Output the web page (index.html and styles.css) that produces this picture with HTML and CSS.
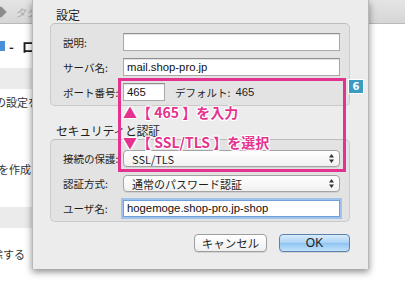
FILE: index.html
```html
<!DOCTYPE html>
<html lang="ja">
  <head>
    <meta charset="utf-8">
    <title>設定</title>
    <link rel="stylesheet" href="styles.css">
  </head>
  <body>
    <div class="page">
      <div class="topbar">
        <span class="tab-icon"></span>
        <span class="tab-label">タク</span>
      </div>
      <div class="side">
        <div class="side-title"><span class="sq"></span><span class="dash">-</span><span class="big">ロ</span></div>
        <div class="band"></div>
        <div class="side-line l1">の設定を</div>
        <div class="side-line l2">を作成す</div>
        <div class="band"></div>
        <div class="side-line l3">除する</div>
      </div>
    </div>

    <div class="sheet">
      <div class="heading">設定</div>
      <div class="group">
        <div class="row">
          <label>説明:</label>
          <div class="field"></div>
        </div>
        <div class="row">
          <label>サーバ名:</label>
          <div class="field">mail.shop-pro.jp</div>
        </div>
        <div class="row">
          <label>ポート番号:</label>
          <div class="field port">465</div>
          <span class="default">デフォルト:</span>
          <span class="default-val">465</span>
        </div>
      </div>

      <div class="heading second">セキュリティと認証</div>
      <div class="group group2">
        <div class="row">
          <label>接続の保護:</label>
          <div class="popup">
            <span>SSL/TLS</span>
            <svg class="arrows" width="5" height="9" viewBox="0 0 5 9"><path d="M2.5 0 L5 3.5 H0 Z M2.5 9 L5 5.5 H0 Z" fill="#333"/></svg>
          </div>
        </div>
        <div class="row">
          <label>認証方式:</label>
          <div class="popup">
            <span>通常のパスワード認証</span>
            <svg class="arrows" width="5" height="9" viewBox="0 0 5 9"><path d="M2.5 0 L5 3.5 H0 Z M2.5 9 L5 5.5 H0 Z" fill="#333"/></svg>
          </div>
        </div>
        <div class="row">
          <label>ユーザ名:</label>
          <div class="field focus">hogemoge.shop-pro.jp-shop</div>
        </div>
      </div>

      <div class="buttons">
        <div class="btn">キャンセル</div>
        <div class="btn ok">OK</div>
      </div>

      <!-- annotation overlay -->
      <div class="note">
        <div class="note-line">▲【 465 】を入力</div>
        <div class="note-line">▼【 SSL/TLS 】を選択</div>
      </div>
      <div class="badge">6</div>
    </div>
  </body>
</html>
```

FILE: styles.css
```css
html, body {
  margin: 0;
  padding: 0;
}

body {
  width: 405px;
  height: 283px;
  overflow: hidden;
  position: relative;
  background: #FFFFFF;
  color: #1E1E1E;
  font-family: "Noto Sans CJK JP", sans-serif;
  font-size: 11px;
}

/* background page */

.topbar {
  height: 23px;
  background: linear-gradient(#E4E4E4, #D6D6D6);
  border-bottom: 1px solid #B9B9B9;
  display: flex;
  align-items: center;
  overflow: hidden;
}

.tab-icon {
  width: 8px;
  height: 8px;
  margin-left: -3px;
  background: #8C8C8C;
  transform: rotate(45deg);
}

.tab-label {
  margin-left: 10px;
  color: #A8A8A8;
  font-style: italic;
  font-size: 11px;
}

.side {
  width: 40px;
}

.side-title {
  height: 44px;
  display: flex;
  align-items: center;
  white-space: nowrap;
}

.sq {
  width: 5px;
  height: 10px;
  background: #4A90D9;
}

.dash {
  margin-left: 4px;
  font-size: 13px;
  font-weight: bold;
}

.big {
  margin-left: 8px;
  font-size: 14px;
  font-weight: bold;
}

.band {
  height: 21px;
  background: #EBEBEB;
}

.side-line {
  height: 18px;
  line-height: 18px;
  white-space: nowrap;
  font-size: 11px;
  color: #333333;
}

.l1 {
  margin: 4px 0 0 -5px;
}

.l2 {
  margin: 49px 0 29px -2px;
}

.l3 {
  margin: 17px 0 0 -8px;
}

/* sheet dialog */

.sheet {
  position: absolute;
  left: 32px;
  top: 0;
  width: 337px;
  height: 269px;
  box-sizing: border-box;
  padding: 6px 18px 0 18px;
  background: #ECECEC;
  border-left: 1px solid #B8B8B8;
  border-right: 1px solid #B8B8B8;
  box-shadow: 0 3px 7px rgba(0, 0, 0, 0.45);
}

.heading {
  height: 17px;
  line-height: 17px;
  padding-left: 5px;
  font-size: 12px;
}

.heading.second {
  margin-top: 16px;
  letter-spacing: -0.4px;
}

.group {
  width: 300px;
  box-sizing: border-box;
  margin-left: -1px;
  padding: 9px 9px 4px 12px;
  background: #E3E3E3;
  border: 1px solid #CACACA;
  border-top-color: #BDBDBD;
  border-radius: 5px;
  display: flex;
  flex-direction: column;
  gap: 7px;
}

.group2 {
  padding-top: 10px;
  gap: 8px;
}

.row {
  display: flex;
  align-items: center;
  height: 18px;
}

.group2 .row {
  height: 17px;
}

.row label {
  width: 60px;
  flex: none;
  font-size: 10.5px;
  white-space: nowrap;
}

.field {
  flex: 1;
  height: 18px;
  box-sizing: border-box;
  padding: 0 3px;
  background: #FFFFFF;
  border: 1px solid #A9A9A9;
  border-top-color: #8E8E8E;
  box-shadow: inset 0 1px 1px rgba(0, 0, 0, 0.12);
  line-height: 16px;
  font-family: "Liberation Sans", sans-serif;
  font-size: 11.3px;
  color: #111111;
}

.field.port {
  flex: none;
  width: 42px;
}

.field.focus {
  height: 17px;
  border: 1px solid #6FA0D6;
  box-shadow: 0 0 0 2px #9FC3EA;
  line-height: 15px;
}

.default {
  margin-left: 10px;
  font-size: 10.5px;
}

.default-val {
  margin-left: 5px;
  font-family: "Liberation Sans", sans-serif;
  font-size: 11.3px;
}

.popup {
  flex: 1;
  height: 17px;
  box-sizing: border-box;
  padding: 0 5px 0 8px;
  display: flex;
  align-items: center;
  justify-content: space-between;
  background: linear-gradient(#FFFFFF, #F1F1F1);
  border: 1px solid #A3A3A3;
  border-radius: 4px;
  box-shadow: 0 1px 0 rgba(0, 0, 0, 0.08);
  font-size: 11px;
}

.buttons {
  margin-top: 12px;
  display: flex;
  justify-content: flex-end;
  gap: 12px;
}

.btn {
  width: 73px;
  height: 18px;
  box-sizing: border-box;
  text-align: center;
  line-height: 16px;
  background: linear-gradient(#FFFFFF, #F0F0F0);
  border: 1px solid #9E9E9E;
  border-radius: 4px;
  box-shadow: 0 1px 0 rgba(0, 0, 0, 0.1);
  font-size: 11.5px;
}

.btn.ok {
  width: 71px;
  background: linear-gradient(#D8ECFB, #A9D2F5 50%, #8DC3F1 51%, #C2E3FB);
  border-color: #5D80AE;
  font-family: "Liberation Sans", sans-serif;
  font-size: 12px;
}

/* pink annotation box */

.note {
  position: absolute;
  left: 85px;
  top: 78px;
  width: 228px;
  height: 94px;
  box-sizing: border-box;
  border: 3px solid #E4338E;
  padding: 22px 0 0 2px;
  display: flex;
  flex-direction: column;
  gap: 12px;
}

.note-line {
  height: 18px;
  line-height: 18px;
  color: #E4338E;
  font-weight: bold;
  font-size: 14px;
  white-space: nowrap;
  text-shadow: 1px 0 0 #FFFFFF, -1px 0 0 #FFFFFF, 0 1px 0 #FFFFFF, 0 -1px 0 #FFFFFF,
    1px 1px 0 #FFFFFF, -1px -1px 0 #FFFFFF, 1px -1px 0 #FFFFFF, -1px 1px 0 #FFFFFF;
}

.badge {
  position: absolute;
  left: 315px;
  top: 79px;
  width: 16px;
  height: 15px;
  box-sizing: border-box;
  background: #3B9CC2;
  border: 1px solid #FFFFFF;
  color: #FFFFFF;
  font-family: "DejaVu Sans", sans-serif;
  font-weight: bold;
  font-size: 10px;
  line-height: 13px;
  text-align: center;
}
```
